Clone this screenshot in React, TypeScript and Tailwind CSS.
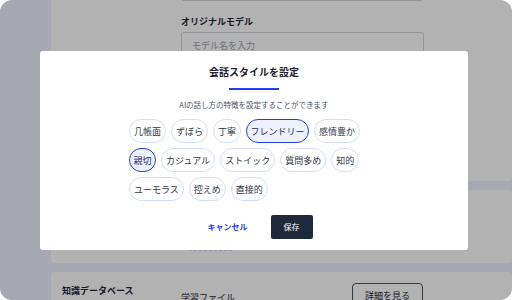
import React from "react";

const chips: { label: string; selected?: boolean }[][] = [
  [{ label: "几帳面" }, { label: "ずぼら" }, { label: "丁寧" }, { label: "フレンドリー", selected: true }, { label: "感情豊か" }],
  [{ label: "親切", selected: true }, { label: "カジュアル" }, { label: "ストイック" }, { label: "質問多め" }, { label: "知的" }],
  [{ label: "ユーモラス" }, { label: "控えめ" }, { label: "直接的" }],
];

function Chip({ label, selected }: { label: string; selected?: boolean }) {
  return selected ? (
    <div className="h-[24px] flex items-center rounded-full border-[1.5px] border-[#1f3fe0] bg-[#eef2ff] px-[3.5px] text-[9px] leading-none text-[#1e2a78]">
      {label}
    </div>
  ) : (
    <div className="h-[24px] flex items-center rounded-full border border-[#d5ddff] bg-white px-[4px] text-[9px] leading-none text-[#333844]">
      {label}
    </div>
  );
}

export default function App() {
  return (
    <div className="w-[512px] h-[300px] bg-white" style={{ fontFamily: '"Noto Sans CJK JP", "Noto Sans", sans-serif' }}>
      <div className="relative w-[512px] h-[300px] rounded-[12px] overflow-hidden bg-[#eef2ff] flex">
        <div className="w-[51px] shrink-0" />
        <div className="flex-1 flex flex-col gap-[9px] -mt-[40px]">
          {/* card 1 */}
          <div className="h-[221px] shrink-0 bg-white rounded-[4px] pl-[130px] pt-[12px]">
            <div className="w-[242px] h-[29px] border border-[#d1d5db] rounded-[3px]" />
            <div className="mt-[15px] text-[9px] leading-[12px] font-bold text-[#1f2937]">オリジナルモデル</div>
            <div className="mt-[4px] w-[243px] h-[28px] border border-[#d1d5db] rounded-[3px] pl-[10px] flex items-center text-[9px] text-[#9ca3af]">
              モデル名を入力
            </div>
          </div>
          {/* card 2 */}
          <div className="h-[73px] shrink-0 bg-white rounded-[4px] pl-[136px] pt-[40px]">
            <div className="w-[49px] h-[21px] border border-dashed border-[#c7d2fe] rounded-[4px]" />
          </div>
          {/* card 3 */}
          <div className="h-[60px] shrink-0 bg-white rounded-[4px] pl-[11px] pt-[11px] flex">
            <div className="w-[119px] shrink-0 pt-[2px] text-[9px] leading-[12px] font-bold text-[#1f2937]">知識データベース</div>
            <div className="w-[242px] flex justify-between">
              <div className="pt-[9px] text-[9px] leading-[12px] text-[#1f2937]">学習ファイル</div>
              <div className="w-[71px] h-[26px] border border-[#4b5563] rounded-[4px] flex items-center justify-center text-[9px] text-[#1f2937]">
                詳細を見る
              </div>
            </div>
          </div>
        </div>
        <div className="absolute inset-0 bg-black/30" />
        <div className="absolute left-[40px] top-[51px] w-[428px] h-[199px] bg-white rounded-[3px] flex flex-col items-center">
          <div className="mt-[14px] text-[10px] leading-[14px] font-bold text-[#1f2330]">会話スタイルを設定</div>
          <div className="mt-[9px] w-[50px] h-[2px] bg-[#1e3ff5]" />
          <div className="mt-[9px] text-[7.5px] leading-[11px] text-[#4b5060]">AIの話し方の特徴を設定することができます</div>
          <div className="mt-[9px] w-[250px] flex flex-col gap-[5px]">
            {chips.map((row, i) => (
              <div key={i} className="flex gap-[5px]">
                {row.map((c) => (
                  <Chip key={c.label} label={c.label} selected={c.selected} />
                ))}
              </div>
            ))}
          </div>
          <div className="mt-[14px] flex items-center gap-[11px]">
            <div className="px-[12px] text-[8px] font-bold text-[#1e3ff5]">キャンセル</div>
            <div className="w-[42px] h-[24px] rounded-[2px] bg-[#1e293b] flex items-center justify-center text-[8px] text-white">保存</div>
          </div>
        </div>
      </div>
    </div>
  );
}
